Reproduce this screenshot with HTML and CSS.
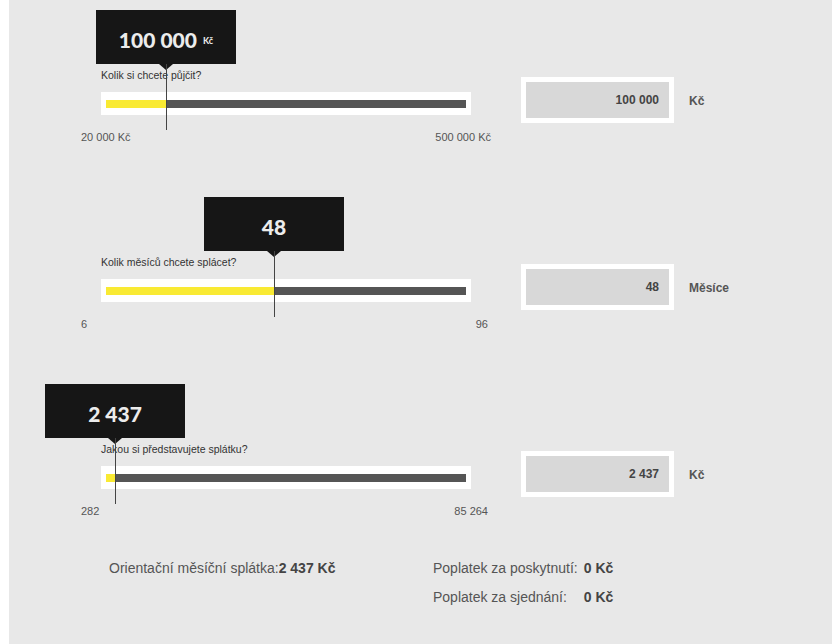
FILE: index.html
```html
<!DOCTYPE html>
<html lang="cs">
<head>
	<meta charset="UTF-8">
	<title>Kalkulačka půjčky</title>
	<link rel="stylesheet" href="styles.css">
</head>
<body>
<div class="calc">
	<div class="row">
		<div class="slider">
			<div class="bubble" style="left: 15px;">100 000 <small>Kč</small></div>
			<div class="thumb" style="left: 85px;"></div>
			<p class="question">Kolik si chcete půjčit?</p>
			<div class="track"><div class="bar"><div class="fill" style="width: 60px;"></div></div></div>
			<div class="scale"><span>20 000 Kč</span><span>500 000 Kč</span></div>
		</div>
		<div class="field">
			<div class="box">100 000</div>
			<span class="unit">Kč</span>
		</div>
	</div>
	<div class="row">
		<div class="slider">
			<div class="bubble" style="left: 123px;">48</div>
			<div class="thumb" style="left: 193px;"></div>
			<p class="question">Kolik měsíců chcete splácet?</p>
			<div class="track"><div class="bar"><div class="fill" style="width: 168px;"></div></div></div>
			<div class="scale"><span>6</span><span class="right">96</span></div>
		</div>
		<div class="field">
			<div class="box">48</div>
			<span class="unit">Měsíce</span>
		</div>
	</div>
	<div class="row last">
		<div class="slider">
			<div class="bubble" style="left: -36px;">2 437</div>
			<div class="thumb" style="left: 34px;"></div>
			<p class="question">Jakou si představujete splátku?</p>
			<div class="track"><div class="bar"><div class="fill" style="width: 9px;"></div></div></div>
			<div class="scale"><span>282</span><span class="right">85 264</span></div>
		</div>
		<div class="field">
			<div class="box">2 437</div>
			<span class="unit">Kč</span>
		</div>
	</div>
	<div class="summary">
		<div class="summary-left">Orientační měsíční splátka:<b>2 437 Kč</b></div>
		<table class="fees">
			<tr><td>Poplatek za poskytnutí:</td><td><b>0 Kč</b></td></tr>
			<tr><td>Poplatek za sjednání:</td><td><b>0 Kč</b></td></tr>
		</table>
	</div>
</div>
</body>
</html>
```

FILE: styles.css
```css
body{
	margin: 0;
	background: #fff;
	font-family: "Liberation Sans", Arial, sans-serif;
}
.calc{
	margin: 0 7px 0 9px;
	height: 644px;
	background: #e8e8e8;
	padding-left: 72px;
	box-sizing: border-box;
}
.row{
	display: flex;
	gap: 30px;
	height: 187px;
}
.row.last{
	height: auto;
}
.slider{
	position: relative;
	width: 410px;
	padding-top: 69px;
}
.bubble{
	position: absolute;
	top: 10px;
	width: 140px;
	height: 54px;
	padding-top: 4px;
	box-sizing: border-box;
	display: flex;
	align-items: center;
	justify-content: center;
	gap: 6px;
	background: #161616;
	color: #ececec;
	font-family: "Lato", "Liberation Sans", sans-serif;
	font-weight: 900;
	font-size: 21px;
}
.bubble small{
	font-size: 9px;
	font-weight: 700;
	margin-top: 3px;
}
.bubble:after{
	content: "";
	position: absolute;
	left: 63px;
	bottom: -6px;
	border-left: 7px solid transparent;
	border-right: 7px solid transparent;
	border-top: 6px solid #161616;
}
.thumb{
	position: absolute;
	top: 64px;
	width: 1px;
	height: 66px;
	background: #444;
	z-index: 2;
}
.question{
	margin: 0 0 0 20px;
	font-size: 10.5px;
	line-height: 12px;
	color: #333;
}
.track{
	margin: 11px 20px 0;
	padding: 8px 5px 7px;
	background: #fff;
}
.bar{
	height: 8px;
	background: #555;
}
.fill{
	height: 8px;
	background: #f9ea33;
}
.scale{
	display: flex;
	justify-content: space-between;
	margin-top: 16px;
	font-size: 11px;
	line-height: 12px;
	color: #555;
}
.scale .right{
	margin-right: 3px;
}
.field{
	display: flex;
	align-items: center;
	gap: 15px;
	margin-top: 77px;
	align-self: flex-start;
}
.box{
	width: 153px;
	height: 46px;
	box-sizing: border-box;
	border: 5px solid #fff;
	background: #d8d8d8;
	padding-right: 10px;
	text-align: right;
	font-size: 12px;
	font-weight: 700;
	line-height: 37px;
	color: #444;
}
.unit{
	font-size: 12px;
	font-weight: 700;
	color: #555;
	padding-top: 2px;
}
.summary{
	display: flex;
	padding: 37px 0 0 28px;
	font-size: 14px;
	color: #555;
}
.summary b{
	color: #444;
}
.summary-left{
	width: 324px;
	line-height: 29px;
}
.fees{
	border-collapse: collapse;
}
.fees td{
	padding: 0;
	height: 29px;
	line-height: 29px;
}
.fees td + td{
	padding-left: 6px;
}
```
